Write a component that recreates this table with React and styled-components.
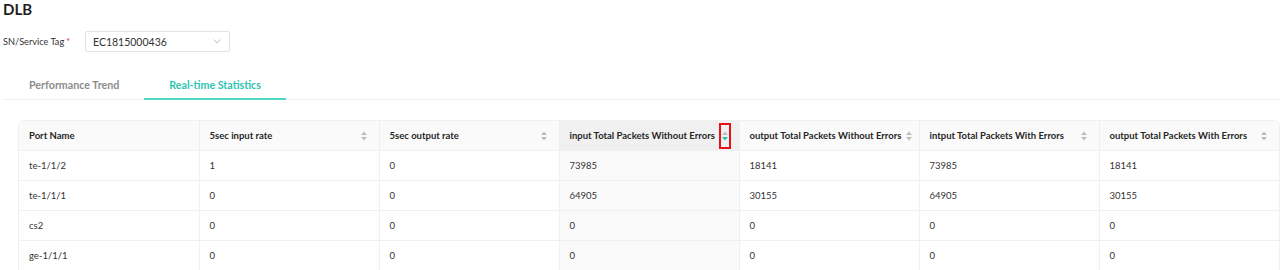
import React from "react";
import styled, { createGlobalStyle } from "styled-components";

const GlobalStyle = createGlobalStyle`
  body {
    margin: 0;
    background: #fff;
    font-family: Lato, "Open Sans", sans-serif;
  }
`;

const Page = styled.div`
  width: 1280px;
  height: 270px;
  overflow: hidden;
  padding: 0 0 0 3px;
  box-sizing: border-box;
`;

const Title = styled.h1`
  margin: 0;
  padding-top: 1px;
  font-size: 15px;
  line-height: 16px;
  font-weight: 700;
  color: #1f1f1f;
`;

const FormRow = styled.div`
  display: flex;
  align-items: center;
  margin-top: 14px;
  height: 21px;
`;

const Label = styled.label`
  width: 82px;
  font-size: 9.2px;
  color: #333;
  display: flex;
  align-items: center;
`;

const Required = styled.span`
  color: #f5222d;
  margin-left: 2px;
  font-size: 9px;
`;

const SelectBox = styled.div`
  width: 145px;
  height: 21px;
  box-sizing: border-box;
  border: 1px solid #e3e3e3;
  border-radius: 2px;
  display: flex;
  align-items: center;
  justify-content: space-between;
  padding: 0 8px 0 7px;
  font-size: 10.5px;
  color: #333;
`;

const TabBar = styled.div`
  display: flex;
  margin-top: 23px;
  padding-left: 1px;
  border-bottom: 1px solid #f0f0f0;
  margin-right: -3px;
`;

const Tab = styled.div`
  padding: 0 25px;
  height: 25px;
  line-height: 20px;
  box-sizing: border-box;
  font-size: 10.7px;
  font-weight: 700;
  color: ${(p) => (p.active ? "#2bc4b0" : "#8c8c8c")};
  border-bottom: 2px solid ${(p) => (p.active ? "#4dd8c6" : "transparent")};
  margin-bottom: -1px;
`;

const TableWrap = styled.div`
  margin: 20px 0 0 15px;
  width: 1260px;
  border: 1px solid #f0f0f0;
  border-bottom: none;
  border-radius: 6px 6px 0 0;
  overflow: hidden;
`;

const Table = styled.table`
  width: 100%;
  border-collapse: collapse;
  table-layout: fixed;
  font-size: 9.5px;
`;

const Th = styled.th`
  height: 29px;
  padding: 0 11px 0 10px;
  text-align: left;
  font-weight: 700;
  color: #262626;
  background: ${(p) => (p.sorted ? "#f0f0f0" : "#fafafa")};
  border-left: 1px solid #f0f0f0;
  border-bottom: 1px solid #f0f0f0;
  &:first-child {
    border-left: none;
  }
`;

const HeadInner = styled.div`
  display: flex;
  align-items: center;
  justify-content: space-between;
  white-space: nowrap;
  gap: 4px;
`;

const Td = styled.td`
  height: 29px;
  padding: 0 10px;
  color: #333;
  background: ${(p) => (p.sorted ? "#fafafa" : "#fff")};
  border-left: 1px solid #f0f0f0;
  border-bottom: 1px solid #f0f0f0;
  &:first-child {
    border-left: none;
  }
`;

const SortBox = styled.span`
  display: flex;
  align-items: center;
  justify-content: center;
  flex: none;
  box-sizing: border-box;
  ${(p) =>
    p.marked
      ? `width: 12px; height: 26px; border: 2px solid #e8101a; margin-right: -3px;`
      : `width: 8px; height: 12px;`}
`;

const Chevron = () => (
  <svg width="8" height="5" viewBox="0 0 8 5">
    <path d="M0.5 0.5 L4 4 L7.5 0.5" fill="none" stroke="#bfbfbf" strokeWidth="1" />
  </svg>
);

const SortIcon = ({ dir, marked }) => (
  <SortBox marked={marked}>
    <svg width="6" height="10" viewBox="0 0 6 10">
      <path d="M0 4 L3 0.5 L6 4 Z" fill={dir === "asc" ? "#2bc4b0" : "#bfbfbf"} />
      <path d="M0 6 L3 9.5 L6 6 Z" fill={dir === "desc" ? "#2bc4b0" : "#bfbfbf"} />
    </svg>
  </SortBox>
);

const columns = [
  { key: "port", title: "Port Name" },
  { key: "in5", title: "5sec input rate", sort: true },
  { key: "out5", title: "5sec output rate", sort: true },
  { key: "inOk", title: "input Total Packets Without Errors", sort: true, sorted: true },
  { key: "outOk", title: "output Total Packets Without Errors", sort: true },
  { key: "inErr", title: "intput Total Packets With Errors", sort: true },
  { key: "outErr", title: "output Total Packets With Errors", sort: true },
];

const rows = [
  ["te-1/1/2", "1", "0", "73985", "18141", "73985", "18141"],
  ["te-1/1/1", "0", "0", "64905", "30155", "64905", "30155"],
  ["cs2", "0", "0", "0", "0", "0", "0"],
  ["ge-1/1/1", "0", "0", "0", "0", "0", "0"],
];

export default function App() {
  return (
    <Page>
      <GlobalStyle />
      <Title>DLB</Title>
      <FormRow>
        <Label>
          SN/Service Tag<Required>*</Required>
        </Label>
        <SelectBox>
          <span>EC1815000436</span>
          <Chevron />
        </SelectBox>
      </FormRow>
      <TabBar>
        <Tab>Performance Trend</Tab>
        <Tab active>Real-time Statistics</Tab>
      </TabBar>
      <TableWrap>
        <Table>
          <thead>
            <tr>
              {columns.map((c) => (
                <Th key={c.key} sorted={c.sorted}>
                  <HeadInner>
                    <span>{c.title}</span>
                    {c.sort && (
                      <SortIcon dir={c.sorted ? "desc" : null} marked={c.sorted} />
                    )}
                  </HeadInner>
                </Th>
              ))}
            </tr>
          </thead>
          <tbody>
            {rows.map((r) => (
              <tr key={r[0]}>
                {r.map((v, i) => (
                  <Td key={i} sorted={columns[i].sorted}>
                    {v}
                  </Td>
                ))}
              </tr>
            ))}
          </tbody>
        </Table>
      </TableWrap>
    </Page>
  );
}
